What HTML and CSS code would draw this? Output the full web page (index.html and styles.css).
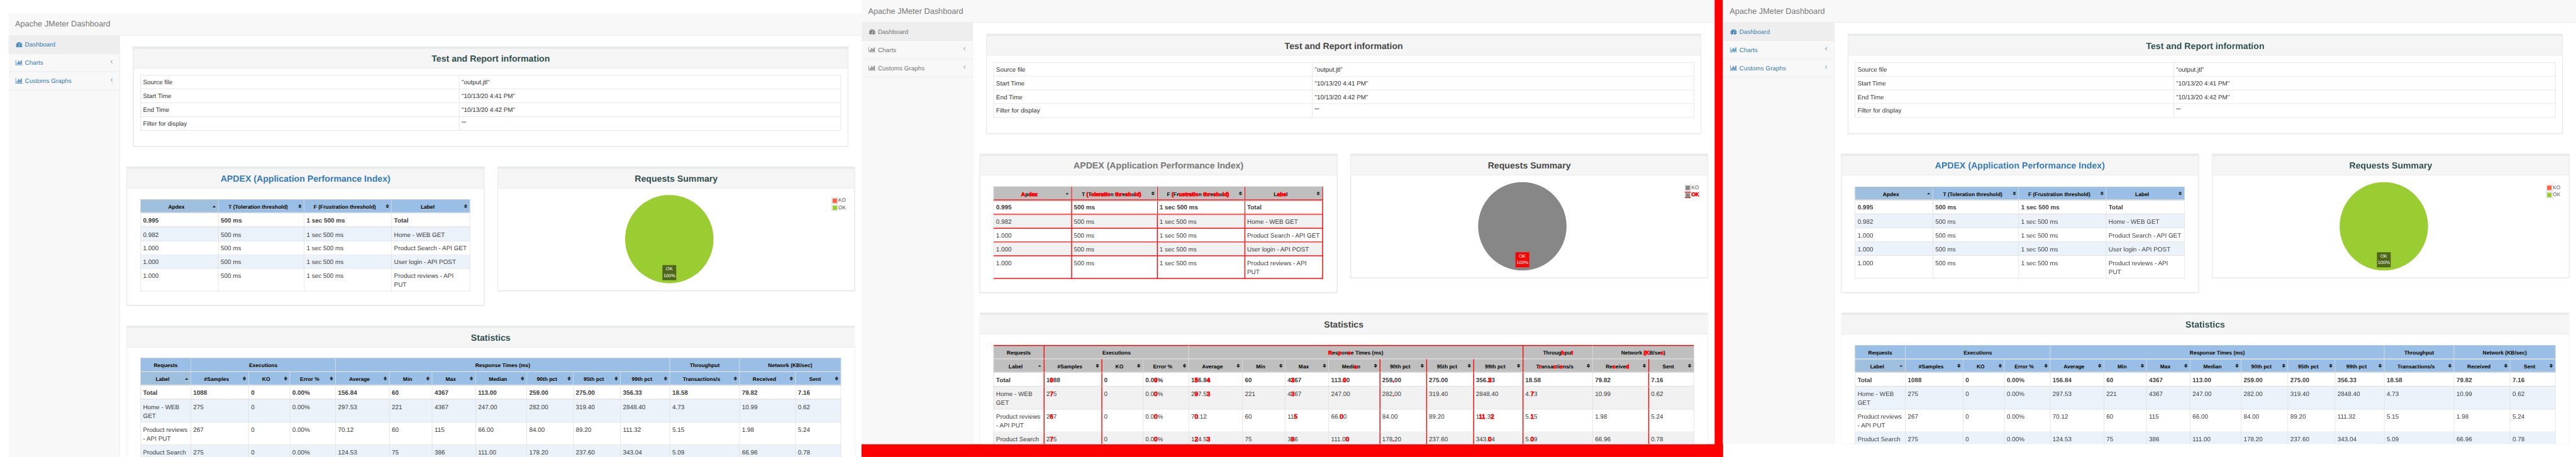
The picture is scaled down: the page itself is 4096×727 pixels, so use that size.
FILE: index.html
```html
<!DOCTYPE html>
<html lang="en">
<head>
<meta charset="utf-8">
<title>Apache JMeter Dashboard</title>
<link rel="stylesheet" href="styles.css">
</head>
<body>
<svg class="sprite" aria-hidden="true">
  <symbol id="tachometer" viewBox="0 0 1792 1792"><path d="M384 1152q0-53-37.5-90.5t-90.5-37.5-90.5 37.5-37.5 90.5 37.5 90.5 90.5 37.5 90.5-37.5 37.5-90.5zM576 704q0-53-37.5-90.5t-90.5-37.5-90.5 37.5-37.5 90.5 37.5 90.5 90.5 37.5 90.5-37.5 37.5-90.5zM1004 1185l101-382q6-26-7.5-48.5t-38.500-29.500-48 6.500-30 39.500l-101 382q-60 5-107 43.500t-63 98.500q-20 77 20 146t117 89 146-20 89-117q16-60-6-117t-72-91zM1664 1152q0-53-37.500-90.500t-90.500-37.500-90.500 37.500-37.500 90.500 37.500 90.500 90.500 37.500 90.500-37.500 37.500-90.500zM1024 512q0-53-37.500-90.500t-90.500-37.500-90.500 37.500-37.500 90.500 37.500 90.500 90.500 37.500 90.500-37.500 37.500-90.500zM1472 704q0-53-37.500-90.500t-90.500-37.500-90.500 37.500-37.500 90.500 37.500 90.500 90.500 37.500 90.500-37.500 37.500-90.500zM1792 1152q0 261-141 483-19 29-54 29h-1402q-35 0-54-29-141-221-141-483 0-182 71-348t191-286 286-191 348-71 348 71 286 191 191 286 71 348z"/></symbol>
  <symbol id="barchart" viewBox="0 0 2048 1792"><path d="M640 896v512h-256v-512h256zM1024 384v1024h-256v-1024h256zM2048 1536v128h-2048v-1536h128v1408h1920zM1408 640v768h-256v-768h256zM1792 256v1152h-256v-1152h256z"/></symbol>
  <symbol id="angle" viewBox="0 0 6 10"><path d="M5 1.500L1.500 5L5 8.500" fill="none" stroke="currentColor" stroke-width="1.200"/></symbol>
</svg>
<div class="viewport">
<div class="stage">

<div class="slot first">
<div class="dash">
  <header class="navbar">Apache JMeter Dashboard</header>
  <div class="main">
    <nav class="sidebar">
      <a class="item active"><svg class="ico"><use href="#tachometer"/></svg>Dashboard</a>
      <a class="item"><svg class="ico"><use href="#barchart"/></svg>Charts<svg class="arrow"><use href="#angle"/></svg></a>
      <a class="item"><svg class="ico"><use href="#barchart"/></svg>Customs Graphs<svg class="arrow"><use href="#angle"/></svg></a>
    </nav>
    <div class="page">
      <section class="panel info">
        <h3>Test and Report information</h3>
        <table class="infotable">
          <tr><td>Source file<td>"output.jtl"
          <tr><td>Start Time<td>"10/13/20 4:41 PM"
          <tr><td>End Time<td>"10/13/20 4:42 PM"
          <tr><td>Filter for display<td>""
        </table>
      </section>
      <div class="row">
        <section class="panel apdex">
          <h3 class="link">APDEX (Application Performance Index)</h3>
          <table class="grid">
            <colgroup><col class="w175"><col class="w193"><col class="w197"><col class="w177"></colgroup>
            <tr class="top"><th class="asc">Apdex<th class="sort">T (Toleration threshold)<th class="sort">F (Frustration threshold)<th class="sort">Label
            <tr class="total"><td>0.995<td>500 ms<td>1 sec 500 ms<td>Total
            <tr class="odd"><td>0.982<td>500 ms<td>1 sec 500 ms<td>Home - WEB GET
            <tr><td>1.000<td>500 ms<td>1 sec 500 ms<td>Product Search - API GET
            <tr class="odd"><td>1.000<td>500 ms<td>1 sec 500 ms<td>User login - API POST
            <tr><td>1.000<td>500 ms<td>1 sec 500 ms<td>Product reviews - API<br>PUT
          </table>
        </section>
        <section class="panel summary">
          <h3>Requests Summary</h3>
          <div class="chart">
            <div class="pie"><div class="pielabel">OK<br>100%</div></div>
            <div class="legend">
              <div class="key"><span class="swatch"><b class="ko"></b></span>KO</div>
              <div class="key"><span class="swatch"><b class="ok"></b></span>OK</div>
            </div>
          </div>
        </section>
      </div>
      <section class="panel stats">
        <h3>Statistics</h3>
        <table class="grid">
          <colgroup><col class="w113"><col class="w130"><col class="w93"><col class="w103"><col class="w121"><col class="w96"><col class="w98"><col class="w115"><col class="w105"><col class="w106"><col class="w111"><col class="w157"><col class="w126"><col class="w103"></colgroup>
          <tr class="top group"><th>Requests<th colspan="3">Executions<th colspan="7">Response Times (ms)<th>Throughput<th colspan="2">Network (KB/sec)
          <tr><th class="asc">Label<th class="sort">#Samples<th class="sort">KO<th class="sort">Error %<th class="sort">Average<th class="sort">Min<th class="sort">Max<th class="sort">Median<th class="sort">90th pct<th class="sort">95th pct<th class="sort">99th pct<th class="sort">Transactions/s<th class="sort">Received<th class="sort">Sent
          <tr class="total"><td>Total<td>1088<td>0<td>0.00%<td>156.84<td>60<td>4367<td>113.00<td>259.00<td>275.00<td>356.33<td>18.58<td>79.82<td>7.16
          <tr class="odd"><td>Home - WEB<br>GET<td>275<td>0<td>0.00%<td>297.53<td>221<td>4367<td>247.00<td>282.00<td>319.40<td>2848.40<td>4.73<td>10.99<td>0.62
          <tr><td>Product reviews<br>- API PUT<td>267<td>0<td>0.00%<td>70.12<td>60<td>115<td>66.00<td>84.00<td>89.20<td>111.32<td>5.15<td>1.98<td>5.24
          <tr class="odd tail"><td>Product Search<td>275<td>0<td>0.00%<td>124.53<td>75<td>386<td>111.00<td>178.20<td>237.60<td>343.04<td>5.09<td>66.96<td>0.78
        </table>
      </section>
    </div>
  </div>
</div>
</div>

<div class="slot diff">
<div class="dash">
  <header class="navbar">Apache JMeter Dashboard</header>
  <div class="main">
    <nav class="sidebar">
      <a class="item active"><svg class="ico"><use href="#tachometer"/></svg>Dashboard</a>
      <a class="item"><svg class="ico"><use href="#barchart"/></svg>Charts<svg class="arrow"><use href="#angle"/></svg></a>
      <a class="item"><svg class="ico"><use href="#barchart"/></svg>Customs Graphs<svg class="arrow"><use href="#angle"/></svg></a>
    </nav>
    <div class="page">
      <section class="panel info">
        <h3>Test and Report information</h3>
        <table class="infotable">
          <tr><td>Source file<td>"output.jtl"
          <tr><td>Start Time<td>"10/13/20 4:41 PM"
          <tr><td>End Time<td>"10/13/20 4:42 PM"
          <tr><td>Filter for display<td>""
        </table>
      </section>
      <div class="row">
        <section class="panel apdex">
          <h3 class="link">APDEX (Application Performance Index)</h3>
          <table class="grid">
            <colgroup><col class="w175"><col class="w193"><col class="w197"><col class="w177"></colgroup>
            <tr class="top"><th class="asc"><i>A</i>p<i>dex</i><th class="sort">T <i>(</i>T<i>oleratio</i>n <i>thr</i>e<i>sh</i>o<i>ld)</i><th class="sort">F <i>(</i>Fr<i>ustratio</i>n <i>thr</i>e<i>sh</i>o<i>ld)</i><th class="sort">L<i>abe</i>l
            <tr class="total"><td>0.995<td>500 ms<td>1 sec 500 ms<td>Total
            <tr class="odd"><td>0.982<td>500 ms<td>1 sec 500 ms<td>Home - WEB GET
            <tr><td>1.000<td>500 ms<td>1 sec 500 ms<td>Product Search - API GET
            <tr class="odd"><td>1.000<td>500 ms<td>1 sec 500 ms<td>User login - API POST
            <tr><td>1.000<td>500 ms<td>1 sec 500 ms<td>Product reviews - API<br>PUT
          </table>
        </section>
        <section class="panel summary">
          <h3>Requests Summary</h3>
          <div class="chart">
            <div class="pie"><div class="pielabel">OK<br>100%</div></div>
            <div class="legend">
              <div class="key"><span class="swatch"><b class="ko"></b></span>KO</div>
              <div class="key changed"><span class="swatch"><b class="ok"></b></span><i>OK</i></div>
            </div>
          </div>
        </section>
      </div>
      <section class="panel stats">
        <h3>Statistics</h3>
        <table class="grid">
          <colgroup><col class="w113"><col class="w130"><col class="w93"><col class="w103"><col class="w121"><col class="w96"><col class="w98"><col class="w115"><col class="w105"><col class="w106"><col class="w111"><col class="w157"><col class="w126"><col class="w103"></colgroup>
          <tr class="top group"><th>Requests<th colspan="3">Executions<th colspan="7"><i>R</i>es<i>p</i>on<i>s</i>e Times (ms)<th>Throug<i>h</i>pu<i>t</i><th colspan="2">Network <i>(K</i>B/se<i>c</i>)
          <tr><th class="asc">Label<th class="sort">#Samples<th class="sort">KO<th class="sort">Error %<th class="sort">Average<th class="sort">Min<th class="sort">Max<th class="sort">Medi<i>a</i>n<th class="sort">90th pct<th class="sort">95th pct<th class="sort">99th pct<th class="sort">T<i>r</i>ansa<i>c</i>ti<i>o</i>ns/s<th class="sort">Re<i>c</i>eive<i>d</i><th class="sort">Sent
          <tr class="total"><td>Total<td>1<i>0</i>88<td>0<td>0.0<i>0</i>%<td>1<i>5</i>6.8<i>4</i><td>60<td>4<i>3</i>67<td>113.<i>0</i>0<td>259<i>.</i>00<td>275.00<td>356.<i>3</i>3<td>18.58<td>79.82<td>7.16
          <tr class="odd"><td>Home - WEB<br>GET<td>2<i>7</i>5<td>0<td>0.0<i>0</i>%<td>2<i>9</i>7.5<i>3</i><td>221<td>4<i>3</i>67<td>247.00<td>282<i>.</i>00<td>319.40<td>2848.40<td>4.<i>7</i>3<td>10.99<td>0.62
          <tr><td>Product reviews<br>- API PUT<td>2<i>6</i>7<td>0<td>0.0<i>0</i>%<td>7<i>0</i>.12<td>60<td>11<i>5</i><td>66.<i>0</i>0<td>84.00<td>89.20<td>1<i>11</i>.3<i>2</i><td>5.<i>1</i>5<td>1.98<td>5.24
          <tr class="odd tail"><td>Product Search<td>2<i>7</i>5<td>0<td>0.0<i>0</i>%<td>1<i>2</i>4.5<i>3</i><td>75<td>3<i>8</i>6<td>111.0<i>0</i><td>178<i>.</i>20<td>237.60<td>343.<i>0</i>4<td>5.<i>0</i>9<td>66.96<td>0.78
        </table>
      </section>
    </div>
  </div>
</div>
</div>

<div class="slot">
<div class="dash">
  <header class="navbar">Apache JMeter Dashboard</header>
  <div class="main">
    <nav class="sidebar">
      <a class="item active"><svg class="ico"><use href="#tachometer"/></svg>Dashboard</a>
      <a class="item"><svg class="ico"><use href="#barchart"/></svg>Charts<svg class="arrow"><use href="#angle"/></svg></a>
      <a class="item"><svg class="ico"><use href="#barchart"/></svg>Customs Graphs<svg class="arrow"><use href="#angle"/></svg></a>
    </nav>
    <div class="page">
      <section class="panel info">
        <h3>Test and Report information</h3>
        <table class="infotable">
          <tr><td>Source file<td>"output.jtl"
          <tr><td>Start Time<td>"10/13/20 4:41 PM"
          <tr><td>End Time<td>"10/13/20 4:42 PM"
          <tr><td>Filter for display<td>""
        </table>
      </section>
      <div class="row">
        <section class="panel apdex">
          <h3 class="link">APDEX (Application Performance Index)</h3>
          <table class="grid">
            <colgroup><col class="w175"><col class="w193"><col class="w197"><col class="w177"></colgroup>
            <tr class="top"><th class="asc">Apdex<th class="sort">T (Toleration threshold)<th class="sort">F (Frustration threshold)<th class="sort">Label
            <tr class="total"><td>0.995<td>500 ms<td>1 sec 500 ms<td>Total
            <tr class="odd"><td>0.982<td>500 ms<td>1 sec 500 ms<td>Home - WEB GET
            <tr><td>1.000<td>500 ms<td>1 sec 500 ms<td>Product Search - API GET
            <tr class="odd"><td>1.000<td>500 ms<td>1 sec 500 ms<td>User login - API POST
            <tr><td>1.000<td>500 ms<td>1 sec 500 ms<td>Product reviews - API<br>PUT
          </table>
        </section>
        <section class="panel summary">
          <h3>Requests Summary</h3>
          <div class="chart">
            <div class="pie"><div class="pielabel">OK<br>100%</div></div>
            <div class="legend">
              <div class="key"><span class="swatch"><b class="ko"></b></span>KO</div>
              <div class="key"><span class="swatch"><b class="ok"></b></span>OK</div>
            </div>
          </div>
        </section>
      </div>
      <section class="panel stats">
        <h3>Statistics</h3>
        <table class="grid">
          <colgroup><col class="w113"><col class="w130"><col class="w93"><col class="w103"><col class="w121"><col class="w96"><col class="w98"><col class="w115"><col class="w105"><col class="w106"><col class="w111"><col class="w157"><col class="w126"><col class="w103"></colgroup>
          <tr class="top group"><th>Requests<th colspan="3">Executions<th colspan="7">Response Times (ms)<th>Throughput<th colspan="2">Network (KB/sec)
          <tr><th class="asc">Label<th class="sort">#Samples<th class="sort">KO<th class="sort">Error %<th class="sort">Average<th class="sort">Min<th class="sort">Max<th class="sort">Median<th class="sort">90th pct<th class="sort">95th pct<th class="sort">99th pct<th class="sort">Transactions/s<th class="sort">Received<th class="sort">Sent
          <tr class="total"><td>Total<td>1088<td>0<td>0.00%<td>156.84<td>60<td>4367<td>113.00<td>259.00<td>275.00<td>356.33<td>18.58<td>79.82<td>7.16
          <tr class="odd"><td>Home - WEB<br>GET<td>275<td>0<td>0.00%<td>297.53<td>221<td>4367<td>247.00<td>282.00<td>319.40<td>2848.40<td>4.73<td>10.99<td>0.62
          <tr><td>Product reviews<br>- API PUT<td>267<td>0<td>0.00%<td>70.12<td>60<td>115<td>66.00<td>84.00<td>89.20<td>111.32<td>5.15<td>1.98<td>5.24
          <tr class="odd tail"><td>Product Search<td>275<td>0<td>0.00%<td>124.53<td>75<td>386<td>111.00<td>178.20<td>237.60<td>343.04<td>5.09<td>66.96<td>0.78
        </table>
      </section>
    </div>
  </div>
</div>
</div>

</div>
</div>
</body>
</html>
```

FILE: styles.css
```css
* { box-sizing: border-box; }
body {
  margin: 0;
  background: #fff;
  font: 14px/20px "Liberation Sans", Arial, sans-serif;
  text-rendering: geometricPrecision;
  color: #333;
}
.sprite { position: absolute; width: 0; height: 0; }

/* Three dashboards side by side, scaled down together */
.viewport {
  width: 4096px;
  height: 727px;
  overflow: hidden;
  contain: strict;
}
.stage {
  display: flex;
  width: 5798px;
  height: 1029px;
  overflow: hidden;
  transform: scale(0.70645);
  transform-origin: 0 0;
}
.slot { flex: none; }
.slot.first { padding: 29px 0 0 19px; }
.slot.diff { border-right: 19px solid #f00; border-bottom: 29px solid #f00; }
.dash { width: 1920px; height: 1000px; overflow: hidden; background: #fff; }

.navbar {
  height: 51px;
  padding: 15px;
  background: #f8f8f8;
  border-bottom: 1px solid #e7e7e7;
  font-size: 18px;
  line-height: 20px;
  color: #777;
}
.main { display: flex; height: 949px; }
.sidebar { width: 250px; background: #f8f8f8; }
.item {
  display: flex;
  align-items: center;
  height: 41px;
  padding: 0 15px;
  border-bottom: 1px solid #e7e7e7;
  color: #337ab7;
}
.item.active { background: #eee; }
.ico { width: 18px; height: 14px; margin-right: 4px; fill: currentColor; }
.arrow { width: 6px; height: 10px; margin: -4px 0 0 auto; }
.page { width: 1670px; border-left: 1px solid #e7e7e7; }

.panel {
  border: 1px solid #ddd;
  border-radius: 1px;
  box-shadow: 0 1px 1px rgba(0, 0, 0, 0.05);
  background: #fff;
}
.panel h3 {
  margin: 0;
  height: 48px;
  padding-top: 3px;
  border-top: 4px solid #e7eaec;
  border-bottom: 1px solid #e7e7e7;
  background: #f5f5f5;
  text-align: center;
  font-size: 20px;
  line-height: 40px;
  font-weight: bold;
  color: #2f4f4f;
}
.panel h3.link { color: #337ab7; }
.info { width: 1609px; height: 225px; margin: 25px 0 0 30px; }
.row { display: flex; align-items: flex-start; gap: 30px; height: 313px; margin: 45px 0 0 15px; }
.apdex { width: 805px; height: 313px; }
.summary { width: 804px; height: 280px; }
.stats { width: 1639px; height: 296px; margin: 45px 0 0 15px; border-bottom: 0; }

table { border-spacing: 0; table-layout: fixed; }
.infotable { width: 1577px; margin: 15px 0 0 15px; border-top: 1px solid #ddd; border-right: 1px solid #ddd; }
.infotable td { padding: 5px; border-left: 1px solid #ddd; border-bottom: 1px solid #ddd; }
.infotable td:first-child { width: 717px; }

.grid { margin: 25px 0 0 30px; white-space: nowrap; color: #3d3d3d; }
.apdex .grid { width: 742px; }
.stats .grid { width: 1577px; margin-top: 24px; }
.grid th, .grid td { border: 0 solid #ddd; border-width: 0 0 1px 1px; }
.grid td { padding: 5.5px 0 4.5px 5px; vertical-align: top; }
.grid th:last-child, .grid td:last-child { border-right-width: 1px; }
.grid th {
  position: relative;
  padding: 5.5px 18px 2.5px 4px;
  border-bottom-width: 2px;
  background: #99bfe6;
  color: #000;
  font-size: 12px;
  text-align: center;
  text-shadow: 0 1px 0 rgba(204, 204, 204, 0.7);
}
.grid .top th { border-top: 1px solid #ccc; }
.grid .group th { padding: 5.5px 4px 3.5px; }
.grid th.asc { background: #9fbfdf; }
.grid .total td { border-bottom-width: 2px; font-weight: bold; }
.grid .odd td { background: #ebf2fa; }
.grid .tail td { padding-bottom: 1.5px; border-bottom: 0; }
th.sort::after, th.asc::after {
  content: "";
  position: absolute;
  right: 5px;
  top: 10px;
  width: 8px;
  height: 9px;
  background: #222;
  clip-path: polygon(50% 0, 100% 4px, 0 4px, 50% 0, 0 5px, 100% 5px, 50% 100%, 0 5px);
}
th.asc::after { top: 13px; height: 4px; clip-path: polygon(50% 0, 100% 100%, 0 100%); }

.chart { display: flex; padding: 15px 0 0 286px; }
.pie {
  display: flex;
  justify-content: center;
  width: 199px;
  height: 199px;
  padding-top: 158px;
  border-radius: 50%;
  background: #9acd32;
}
.pielabel {
  width: 31px;
  height: 34px;
  padding-top: 2px;
  background: #4d6619;
  color: #fff;
  font-size: 10.67px;
  line-height: 15px;
  text-align: center;
}
.legend { margin: 6px 0 0 266px; font-size: 11.7px; line-height: 14px; color: #545454; }
.key { display: flex; align-items: center; gap: 1px; height: 14px; margin-bottom: 2px; }
.swatch { width: 14px; height: 14px; padding: 1px; border: 1px solid #ccc; background: #fff; }
.swatch b { display: block; width: 10px; height: 10px; }
.ko { background: #ff6347; }
.ok { background: #9acd32; }

/* Grayscale comparison with changed pixels in red */
.diff i { font-style: normal; color: #f00; -webkit-text-stroke: 1.2px #f00; text-shadow: none; }
.diff .item { color: #757575; }
.diff .panel h3 { color: #474747; border-top-color: #e9e9e9; }
.diff .panel h3.link { color: #777; }
.diff .grid th { background: #bfbfbf; }
.diff .grid .odd td { background: #f1f1f1; }
.diff .pie, .diff .swatch b { background: #878787; }
.diff .pielabel { background: #f00; }
.diff .changed .swatch { border-top: 2px solid #f00; border-bottom: 2px solid #f00; }
.diff .apdex th:nth-child(n+2), .diff .apdex td:nth-child(n+2) { border-left: 2px solid #f00; padding-left: 4px; }
.diff .apdex th:last-child, .diff .apdex td:last-child { border-right: 2px solid #f00; }
.diff .apdex td { padding-top: 4.5px; padding-bottom: 4.5px; border-bottom: 2px solid #f00; }
.diff .apdex th, .diff .apdex .total td { border-bottom: 3px double #f00; }
.diff .stats .top th { border-top: 2px solid #f00; padding-top: 4.5px; }
.diff .stats .top th:nth-child(2), .diff .stats .top th:nth-child(4) { border-left: 2px solid #f00; }
.diff .stats tr:not(.top) > :is(:nth-child(2), :nth-child(3), :nth-child(9), :nth-child(10), :nth-child(11), :nth-child(12), :nth-child(14)) {
  border-left: 2px solid #f00;
  padding-left: 4px;
}

/* Column widths */
.w93 { width: 93px; }
.w96 { width: 96px; }
.w98 { width: 98px; }
.w103 { width: 103px; }
.w105 { width: 105px; }
.w106 { width: 106px; }
.w111 { width: 111px; }
.w113 { width: 113px; }
.w115 { width: 115px; }
.w121 { width: 121px; }
.w126 { width: 126px; }
.w130 { width: 130px; }
.w157 { width: 157px; }
.w175 { width: 175px; }
.w177 { width: 177px; }
.w193 { width: 193px; }
.w197 { width: 197px; }
```
